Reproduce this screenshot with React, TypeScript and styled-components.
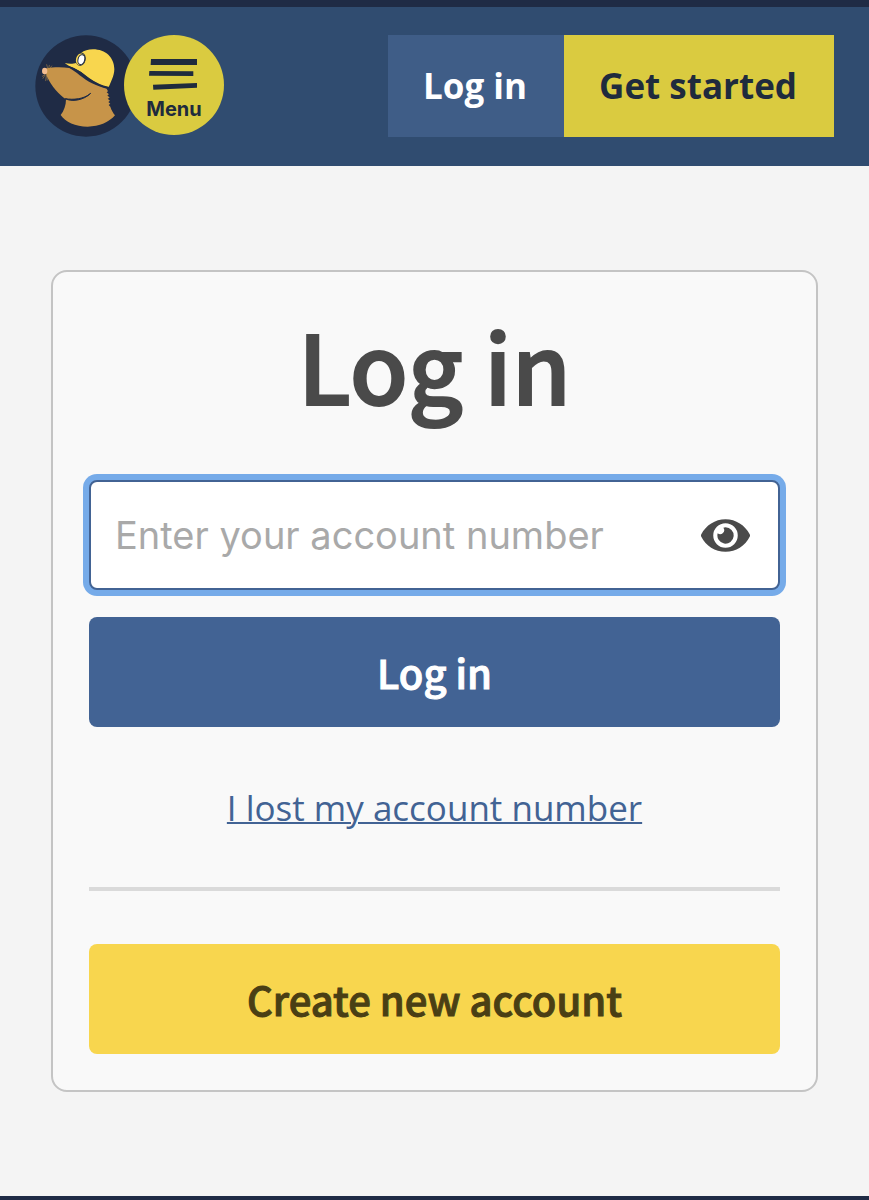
import React from "react";
import styled, { createGlobalStyle, css } from "styled-components";
import { FaEye } from "react-icons/fa";

const headingFont = `"Source Sans Pro", "Noto Sans CJK SC", "Open Sans", sans-serif`;

const GlobalStyle = createGlobalStyle`
  *, *::before, *::after { box-sizing: border-box; }
  body {
    margin: 0;
    background: #f4f4f4;
    color: #4a4a4a;
    font-family: "Open Sans", "Noto Sans", sans-serif;
    font-size: 35px;
  }
`;

const Page = styled.div`
  display: flex;
  flex-direction: column;
  min-height: 100vh;
`;

const Header = styled.header`
  display: flex;
  justify-content: space-between;
  align-items: flex-start;
  padding: 28px 35px 29px;
  border-top: 7px solid #1f2b45;
  background: #304c70;
`;

const Brand = styled.div`
  display: flex;
`;

const HomeLink = styled.a`
  display: block;
  width: 102px;
  height: 102px;
`;

const MenuButton = styled.button`
  display: flex;
  flex-direction: column;
  align-items: center;
  width: 100px;
  height: 100px;
  margin: 0 0 0 -13px;
  padding: 23px 0 0;
  border: 0;
  border-radius: 50%;
  background: #dacb40;
  color: #1f2b3d;
  font: 700 20px/26px Inter, "Liberation Sans", sans-serif;
  position: relative;
  cursor: pointer;
`;

const MenuIcon = styled.svg`
  display: block;
  width: 48px;
  height: 32px;
  margin-bottom: 6px;
  overflow: visible;
`;

const HeaderNav = styled.nav`
  display: flex;
`;

const NavLink = styled.a<{ $accent?: boolean }>`
  padding: 0 37px 0 35px;
  background: ${(p) => (p.$accent ? "#dacb40" : "#3f5d87")};
  color: ${(p) => (p.$accent ? "#1f2b3d" : "#ffffff")};
  font-weight: 700;
  line-height: 102px;
  text-decoration: none;
  white-space: nowrap;
`;

const Main = styled.main`
  flex: 1;
  padding: 104px 51px;
`;

const Card = styled.section`
  display: flex;
  flex-direction: column;
  padding: 36px;
  border: 2px solid #c4c4c4;
  border-radius: 16px;
  background: #f9f9f9;
`;

const Title = styled.h1`
  margin: 0 0 60px;
  font-family: ${headingFont};
  font-size: 95px;
  font-weight: 500;
  line-height: 112px;
  text-align: center;
  -webkit-text-stroke: 2px currentColor;
`;

const Form = styled.form`
  display: flex;
  flex-direction: column;
  gap: 27px;
`;

const Field = styled.div`
  display: flex;
  align-items: center;
  height: 110px;
  padding: 0 28px 0 24px;
  border: 2px solid #426394;
  border-radius: 8px;
  background: #ffffff;
  box-shadow: 0 0 0 6px #76abe9;
`;

const AccountInput = styled.input`
  flex: 1;
  min-width: 0;
  padding: 0;
  border: 0;
  outline: 0;
  background: transparent;
  color: #4a4a4a;
  font: 400 38px/48px Inter, "Liberation Sans", sans-serif;

  &::placeholder {
    color: #a9a9a9;
    opacity: 1;
  }
`;

const RevealButton = styled.button`
  display: flex;
  padding: 0;
  border: 0;
  background: none;
  color: #4a4a4a;
  cursor: pointer;
`;

const actionStyle = css`
  display: block;
  width: 100%;
  padding: 0;
  border: 0;
  border-radius: 8px;
  font-family: ${headingFont};
  font-size: 40px;
  font-weight: 500;
  line-height: 110px;
  text-align: center;
  text-decoration: none;
  -webkit-text-stroke: 1px currentColor;
  cursor: pointer;
`;

const SubmitButton = styled.button`
  ${actionStyle}
  background: #426394;
  color: #ffffff;
`;

const CreateLink = styled.a`
  ${actionStyle}
  background: #f8d64e;
  color: #4a3f14;
`;

const LostLink = styled.a`
  align-self: center;
  margin: 57px 0 55px;
  color: #426394;
  line-height: 48px;
  text-decoration: underline;
  text-decoration-thickness: 2px;
`;

const Divider = styled.hr`
  width: 100%;
  height: 4px;
  margin: 0 0 53px;
  border: 0;
  background: #dadada;
`;

const Footer = styled.footer`
  height: 4px;
  background: #1f2b45;
`;

const MoleLogo = () => (
  <svg viewBox="45 45 306 306" width="102" height="102" aria-hidden="true">
    <circle cx="198" cy="198" r="152" fill="#1f2b45" />
    <path
      d="M76 146 C98 141 126 141 148 144 C168 154 188 176 216 190 C232 198 248 203 260 206 L264 214 L260 217 L267 223 L262 226 L269 233 L263 236 L270 242 L265 246 L271 251 L266 255 L271 260 C274 270 279 278 285 286 C268 306 238 320 203 320 C166 320 136 306 122 285 C132 273 138 256 138 238 C118 225 94 198 82 172 C78 164 76 154 76 146 Z"
      fill="#c79449"
    />
    <path
      d="M136 236 C154 246 190 242 212 220 C191 238 160 240 136 236 Z"
      fill="#1f2b45"
      stroke="#1f2b45"
      strokeWidth="3"
      strokeLinejoin="round"
    />
    <ellipse cx="74" cy="153" rx="8" ry="10" fill="#f3bd91" />
    <path
      d="M83 145 L80 134 M86 145 L88 136 M89 146 L95 138 M76 164 L69 175 M79 166 L77 182 M81 168 L82 180 M74 164 L67 169"
      fill="none"
      stroke="#c79449"
      strokeWidth="1.5"
      strokeLinecap="round"
    />
    <path
      d="M134 129 C147 132 160 132 169 128 C170 104 190 88 219 88 C257 88 283 113 283 148 C283 168 271 188 266 202 C236 196 211 179 190 161 C173 147 151 143 134 129 Z"
      fill="#f8d64e"
    />
    <path
      d="M148 141 C174 148 189 164 207 177 C225 190 246 199 265 203"
      fill="none"
      stroke="#1f2b45"
      strokeWidth="5"
      strokeLinecap="round"
    />
    <ellipse cx="182" cy="118" rx="15" ry="20" transform="rotate(14 182 118)" fill="#1f2b45" />
    <ellipse cx="181" cy="118" rx="13" ry="18" transform="rotate(14 181 118)" fill="#f8d64e" />
    <ellipse
      cx="184"
      cy="119"
      rx="10"
      ry="15"
      transform="rotate(14 184 119)"
      fill="#ffffff"
      stroke="#1f2b45"
      strokeWidth="3"
    />
  </svg>
);

export default function App() {
  return (
    <>
      <GlobalStyle />
      <Page>
        <Header>
          <Brand>
            <HomeLink href="#" aria-label="Home">
              <MoleLogo />
            </HomeLink>
            <MenuButton type="button">
              <MenuIcon viewBox="389 114 144 96" aria-hidden="true">
                <g fill="#1f2b3d">
                  <path d="M392 117 H530 V135 H391 Z" />
                  <path d="M387 153 L519 154 V168 L386 167 Z" />
                  <path d="M398 194 L530 189 V203 L399 209 Z" />
                </g>
              </MenuIcon>
              Menu
            </MenuButton>
          </Brand>
          <HeaderNav aria-label="Account">
            <NavLink href="#login">Log in</NavLink>
            <NavLink href="#start" $accent>
              Get started
            </NavLink>
          </HeaderNav>
        </Header>
        <Main>
          <Card id="login">
            <Title>Log in</Title>
            <Form onSubmit={(e) => e.preventDefault()}>
              <Field>
                <AccountInput
                  type="text"
                  inputMode="numeric"
                  aria-label="Account number"
                  placeholder="Enter your account number"
                />
                <RevealButton type="button" aria-label="Show account number">
                  <FaEye size={49} />
                </RevealButton>
              </Field>
              <SubmitButton type="submit">Log in</SubmitButton>
            </Form>
            <LostLink href="#lost">I lost my account number</LostLink>
            <Divider />
            <CreateLink href="#create">Create new account</CreateLink>
          </Card>
        </Main>
        <Footer />
      </Page>
    </>
  );
}
